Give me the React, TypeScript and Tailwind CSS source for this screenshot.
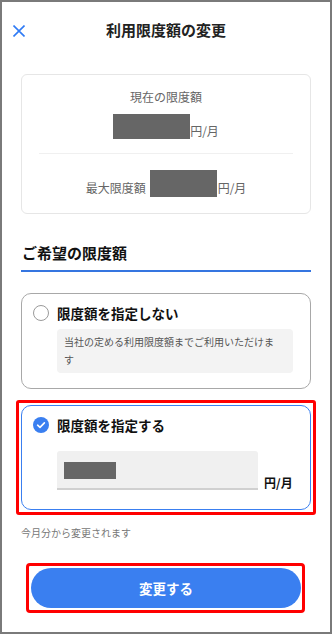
import React from 'react';

const font = { fontFamily: '"Noto Sans CJK JP", "Noto Sans", sans-serif' };

const App: React.FC = () => {
  return (
    <div
      className="w-[332px] h-[634px] bg-white border-2 border-[#7a7a7a] flex flex-col overflow-hidden"
      style={font}
    >
      {/* header */}
      <header className="relative h-[56px] shrink-0 flex items-center justify-center">
        <button className="absolute left-[11px] top-[23px] w-[12px] h-[12px]">
          <svg viewBox="0 0 12 12" width="12" height="12" fill="none" stroke="#2f7bf5" strokeWidth="1.6">
            <path d="M0.5 0.5L11.5 11.5M11.5 0.5L0.5 11.5" />
          </svg>
        </button>
        <h1 className="text-[15px] font-bold text-[#222] leading-[20px]">利用限度額の変更</h1>
      </header>

      <main className="px-[19px] flex flex-col">
        {/* current limit card */}
        <section className="mt-[16px] border border-[#e6e6e6] rounded-[6px] pt-[13px] pb-[16px] px-[17px] flex flex-col items-center">
          <p className="text-[12px] leading-[18px] text-[#666]">現在の限度額</p>
          <div className="mt-[8px] flex items-end">
            <div className="w-[77px] h-[25px] bg-[#666]" />
            <span className="text-[12px] leading-[16px] text-[#666]">円/月</span>
          </div>
          <div className="w-full mt-[14px] h-px bg-[#f0f0f0]" />
          <div className="mt-[16px] flex items-end">
            <span className="text-[12px] leading-[18px] text-[#666] mr-[4px]">最大限度額</span>
            <div className="w-[67px] h-[27px] bg-[#666]" />
            <span className="text-[12px] leading-[18px] text-[#666] ml-[1px]">円/月</span>
          </div>
        </section>

        {/* desired limit */}
        <h2 className="mt-[28px] pl-[1px] pb-[6px] border-b-2 border-[#3575e0] text-[15px] font-bold leading-[22px] text-[#111]">
          ご希望の限度額
        </h2>

        <div className="mt-[21px] border border-[#a8a8a8] rounded-[10px] pt-[9px] pb-[15px] pl-[11px] pr-[17px]">
          <div className="flex items-center gap-[8px] h-[20px]">
            <span className="w-[16px] h-[16px] rounded-full border-[1.5px] border-[#9a9a9a] bg-white" />
            <span className="text-[13.5px] font-bold leading-[20px] text-[#111]">限度額を指定しない</span>
          </div>
          <div className="mt-[6px] ml-[24px] bg-[#f3f3f3] rounded-[4px] pl-[7px] pr-[16px] py-[4px] text-[10px] leading-[18px] text-[#555]">
            当社の定める利用限度額までご利用いただけます
          </div>
        </div>

        <div className="relative mt-[16px]">
          <div className="absolute -left-[5px] -right-[5px] -top-[5px] -bottom-[5px] border-[3px] border-[#ff0000] rounded-[3px] pointer-events-none" />
          <div className="border-[1.5px] border-[#3a7ff0] rounded-[10px] pt-[9px] pb-[19px] pl-[11px] pr-[17px] bg-white">
            <div className="flex items-center gap-[8px] h-[20px]">
              <span className="w-[16px] h-[16px] rounded-full bg-[#3a7ff0] flex items-center justify-center">
                <svg viewBox="0 0 16 16" width="16" height="16" fill="none" stroke="#fff" strokeWidth="1.6" strokeLinecap="round" strokeLinejoin="round">
                  <path d="M4.6 8.2L7 10.4L11.4 5.9" />
                </svg>
              </span>
              <span className="text-[13.5px] font-bold leading-[20px] text-[#111]">限度額を指定する</span>
            </div>
            <div className="mt-[16px] ml-[24px] flex items-end gap-[6px]">
              <div className="w-[201px] h-[39px] bg-[#f0f0f0] rounded-t-[3px] border-b-2 border-[#d0d0d0] flex items-center pl-[7px] pt-[2px]">
                <div className="w-[52px] h-[17px] bg-[#666]" />
              </div>
              <span className="text-[12px] font-bold leading-[14px] text-[#111]">円/月</span>
            </div>
          </div>
        </div>

        <p className="mt-[16px] text-[10px] leading-[14px] text-[#777]">今月分から変更されます</p>

        <div className="relative mt-[28px] mx-[10px]">
          <div className="absolute -left-[5px] -right-[4px] -top-[5px] -bottom-[5px] border-[3px] border-[#ff0000] rounded-[4px] pointer-events-none" />
          <button className="w-full h-[40px] rounded-full bg-[#3a7ff0] text-white text-[13.5px] font-bold leading-[20px]">
            変更する
          </button>
        </div>
      </main>
    </div>
  );
};

export default App;
